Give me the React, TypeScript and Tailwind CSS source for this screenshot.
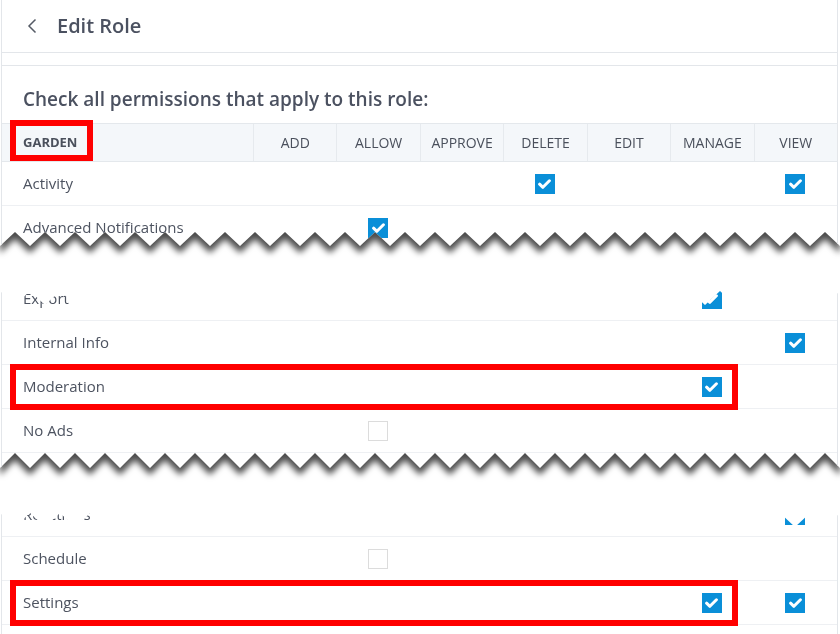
import type { ReactNode } from 'react';

const COLUMNS = ['ADD', 'ALLOW', 'APPROVE', 'DELETE', 'EDIT', 'MANAGE', 'VIEW'];

type Perm = 'on' | 'off';

type Row = {
  label: string;
  perms: Partial<Record<string, Perm>>;
};

const W = 840;

/** Zigzag polygon for the torn edges of a screenshot piece. */
function tornClip(height: number, top?: [number, number], bottom?: [number, number]) {
  const pts: string[] = [];
  if (top) {
    for (let x = 0; x <= W; x += 15) {
      pts.push(`${x}px ${x % 30 === 0 ? top[0] : top[1]}px`);
    }
  } else {
    pts.push('0px -20px', `${W}px -20px`);
  }
  if (bottom) {
    for (let x = W; x >= 0; x -= 15) {
      pts.push(`${x}px ${x % 30 === 0 ? bottom[1] : bottom[0]}px`);
    }
  } else {
    pts.push(`${W}px ${height}px`, `0px ${height}px`);
  }
  return `polygon(${pts.join(', ')})`;
}

function Checkbox({ state }: { state?: Perm }) {
  if (!state) return null;
  if (state === 'off') {
    return <div className="w-5 h-5 border border-[#dcdcdc] bg-white" />;
  }
  return (
    <div className="w-5 h-5 bg-[#0a8fd8] flex items-center justify-center">
      <svg width="13" height="10" viewBox="0 0 13 10">
        <path
          d="M1.6 5.2 L4.9 8.3 L11.4 1.8"
          fill="none"
          stroke="white"
          strokeWidth="3"
          strokeLinecap="round"
          strokeLinejoin="round"
        />
      </svg>
    </div>
  );
}

function PermRow({ row }: { row: Row }) {
  return (
    <div className="grid grid-cols-[251px_repeat(7,1fr)] h-[44px] items-center border-b border-[#eef0f3]">
      <div className="pl-[21px] text-[15px] text-[#4d5360]">{row.label}</div>
      {COLUMNS.map((c) => (
        <div key={c} className="flex justify-center">
          <Checkbox state={row.perms[c]} />
        </div>
      ))}
    </div>
  );
}

/**
 * One piece of the torn screenshot. The top edge is clipped on the outer
 * element so that only the bottom edge casts a shadow.
 */
function Piece({
  height,
  top,
  bottom,
  children,
}: {
  height: number;
  top?: [number, number];
  bottom?: [number, number];
  children: ReactNode;
}) {
  return (
    <div style={{ height, clipPath: top ? tornClip(height + 30, top) : undefined }}>
      <div className="drop-shadow-[0_7px_3px_rgba(0,0,0,0.7)]">
        <div
          className="bg-white overflow-hidden"
          style={{ height, clipPath: bottom ? tornClip(height, undefined, bottom) : undefined }}
        >
          <div className="ml-px w-[837px] h-full border-l border-r border-[#e3e6ea]">
            {children}
          </div>
        </div>
      </div>
    </div>
  );
}

export default function App() {
  return (
    <div className="w-[840px] h-[634px] bg-white overflow-hidden relative font-['Open_Sans',sans-serif]">
      {/* Piece 1: header, table head and the first rows */}
      <Piece height={250} bottom={[232, 246]}>
        <div className="h-[53px] flex items-center border-b border-[#e3e6ea]">
          <svg className="ml-[25px]" width="11" height="16" viewBox="0 0 11 16">
            <path d="M8.5 1.5 L2 8 L8.5 14.5" fill="none" stroke="#555b66" strokeWidth="1.5" />
          </svg>
          <span className="ml-[19px] text-[20px] font-semibold text-[#4b5160] -mt-[1px]">
            Edit Role
          </span>
        </div>
        <div className="mt-[12px] border-t border-[#e3e6ea]" />
        <div className="h-[57px] flex items-end pb-[10px] pl-[21px] text-[19px] font-semibold text-[#4b5160]">
          Check all permissions that apply to this role:
        </div>
        <div className="grid grid-cols-[251px_repeat(7,1fr)] h-[39px] bg-[#f4f7fa] border-t border-b border-[#e4e8ec] text-[#4a505c]">
          <div className="pl-[21px] flex items-center text-[13px] font-bold">GARDEN</div>
          {COLUMNS.map((c) => (
            <div
              key={c}
              className="flex items-center justify-center border-l border-[#e6eaee] text-[14px] font-medium"
            >
              {c}
            </div>
          ))}
        </div>
        <PermRow row={{ label: 'Activity', perms: { DELETE: 'on', VIEW: 'on' } }} />
        <PermRow row={{ label: 'Advanced Notifications', perms: { ALLOW: 'on' } }} />
      </Piece>

      {/* Piece 2 */}
      <div className="mt-[27px]">
        <Piece height={191} top={[14, 28]} bottom={[176, 191]}>
          <PermRow row={{ label: 'Export', perms: { MANAGE: 'on' } }} />
          <PermRow row={{ label: 'Internal Info', perms: { VIEW: 'on' } }} />
          <PermRow row={{ label: 'Moderation', perms: { MANAGE: 'on' } }} />
          <PermRow row={{ label: 'No Ads', perms: { ALLOW: 'off' } }} />
        </Piece>
      </div>

      {/* Piece 3 */}
      <div className="mt-[25px]">
        <Piece height={141} top={[20, 34]}>
          <PermRow row={{ label: 'Reactions', perms: { VIEW: 'on' } }} />
          <PermRow row={{ label: 'Schedule', perms: { ALLOW: 'off' } }} />
          <PermRow row={{ label: 'Settings', perms: { MANAGE: 'on', VIEW: 'on' } }} />
        </Piece>
      </div>

      {/* Red annotation boxes */}
      <div className="absolute left-[10px] top-[120px] w-[83px] h-[41px] border-[6px] border-[#ff0000]" />
      <div className="absolute left-[10px] top-[364px] w-[728px] h-[46px] border-[6px] border-[#ff0000]" />
      <div className="absolute left-[10px] top-[580px] w-[728px] h-[46px] border-[6px] border-[#ff0000]" />
    </div>
  );
}
